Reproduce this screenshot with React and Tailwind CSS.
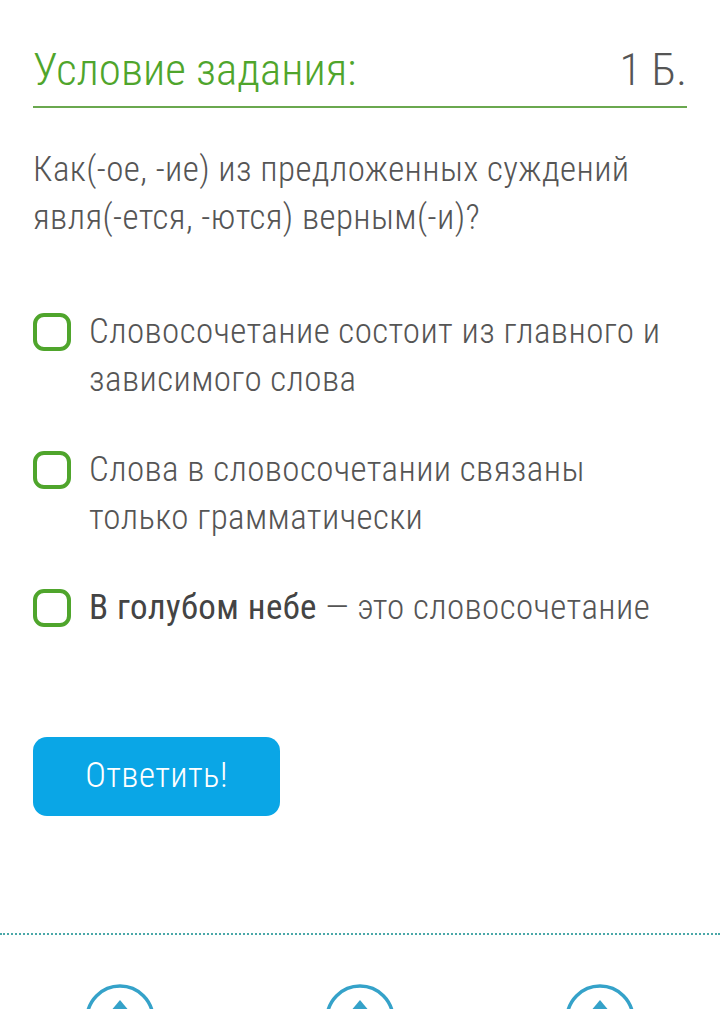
const font = { fontFamily: '"Roboto Condensed", Roboto, "Liberation Sans", sans-serif' };

const options = [
  { id: 1, text: "Словосочетание состоит из главного и зависимого слова" },
  { id: 2, text: "Слова в словосочетании связаны только грамматически" },
  {
    id: 3,
    text: (
      <>
        <span className="font-normal text-[#444]">В голубом небе</span> — это словосочетание
      </>
    ),
  },
];

function ArrowCircle() {
  return (
    <svg width="72" height="40" viewBox="0 0 72 40" className="block">
      <circle cx="36" cy="37" r="33" fill="none" stroke="#35a2c9" strokeWidth="3.5" />
      <path d="M36 18 L46 30 L26 30 Z" fill="#35a2c9" />
    </svg>
  );
}

export default function App() {
  return (
    <div className="w-[720px] h-[1009px] overflow-hidden bg-white" style={font}>
      <div className="px-[33px] pt-[46px]">
        {/* header */}
        <div className="flex items-center justify-between pb-[12px] border-b-2 border-[#6aa84f]">
          <h1 className="text-[45px] leading-[48px] font-light text-[#4fa52c]">Условие задания:</h1>
          <span className="text-[45px] leading-[48px] font-light text-[#555]">1 Б.</span>
        </div>

        <p className="mt-[38px] text-[35px] leading-[48px] font-light text-[#555] tracking-[0.4px]">
          Как(-ое, -ие) из предложенных суждений явля(-ется, -ются) верным(-и)?
        </p>

        <div className="mt-[66px] flex flex-col gap-[42px]">
          {options.map((o) => (
            <label key={o.id} className="flex items-start gap-[18px]">
              <span className="mt-[5px] w-[38px] h-[38px] shrink-0 rounded-[11px] border-[4px] border-[#4fa52c]" />
              <span className="text-[35px] leading-[48px] font-light text-[#555] tracking-[0.4px]">{o.text}</span>
            </label>
          ))}
        </div>

        <button className="mt-[105px] w-[247px] h-[79px] rounded-[14px] bg-[#0aa6e6] text-white text-[35px] font-light tracking-[0.4px]">
          Ответить!
        </button>
      </div>

      <div className="mt-[117px] border-t-2 border-dotted border-[#4aa8a8]" />

      <div className="mt-[47px] grid grid-cols-3 justify-items-center">
        <ArrowCircle />
        <ArrowCircle />
        <ArrowCircle />
      </div>
    </div>
  );
}
